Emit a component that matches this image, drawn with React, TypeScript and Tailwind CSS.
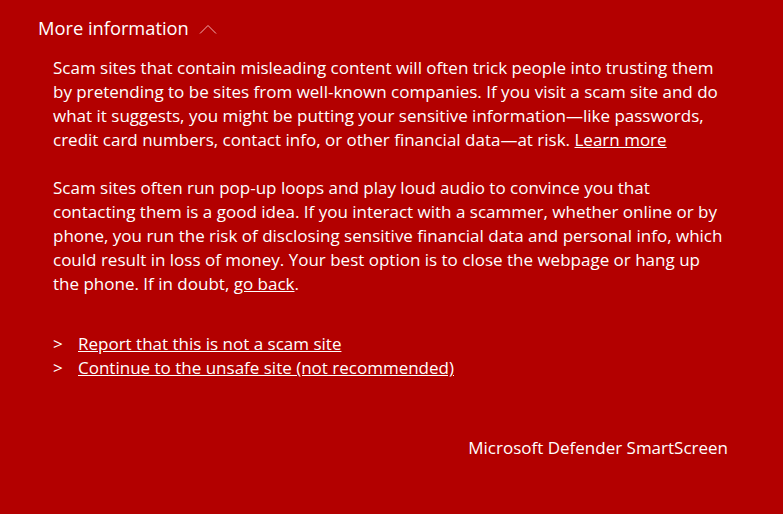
import { useState } from 'react';

export default function App() {
  const [open, setOpen] = useState(true);

  return (
    <div
      className="w-[783px] h-[514px] bg-[#b30000] text-white overflow-hidden"
      style={{ fontFamily: '"Open Sans", "Noto Sans", sans-serif' }}
    >
      <div className="pt-[14px] pl-[38px] pr-[55px]">
        <button
          onClick={() => setOpen(!open)}
          className="flex items-center gap-[10px] text-[18.3px] leading-[28px] text-white"
        >
          More information
          <svg width="18" height="10" viewBox="0 0 18 10" fill="none" className="mt-[1px]">
            <path d="M1 9.5 L9 1.5 L17 9.5" stroke="#f0b0b0" strokeWidth="1" />
          </svg>
        </button>

        {open && (
          <div className="pl-[15px] pt-[14px] text-[17px] leading-[24px]">
            <p>
              Scam sites that contain misleading content will often trick people into trusting them by pretending to be
              sites from well-known companies. If you visit a scam site and do what it suggests, you might be putting
              your sensitive information—like passwords, credit card numbers, contact info, or other financial data—at
              risk. <a className="underline cursor-pointer">Learn more</a>
            </p>
            <p className="mt-[24px]">
              Scam sites often run pop-up loops and play loud audio to convince you that contacting them is a good idea.
              If you interact with a scammer, whether online or by phone, you run the risk of disclosing sensitive
              financial data and personal info, which could result in loss of money. Your best option is to close the
              webpage or hang up the phone. If in doubt, <a className="underline cursor-pointer">go back</a>.
            </p>

            <ul className="mt-[36px] flex flex-col">
              <li className="flex">
                <span className="w-[25px]">&gt;</span>
                <a className="underline cursor-pointer">Report that this is not a scam site</a>
              </li>
              <li className="flex">
                <span className="w-[25px]">&gt;</span>
                <a className="underline cursor-pointer">Continue to the unsafe site (not recommended)</a>
              </li>
            </ul>

            <div className="mt-[56px] flex justify-end">Microsoft Defender SmartScreen</div>
          </div>
        )}
      </div>
    </div>
  );
}
